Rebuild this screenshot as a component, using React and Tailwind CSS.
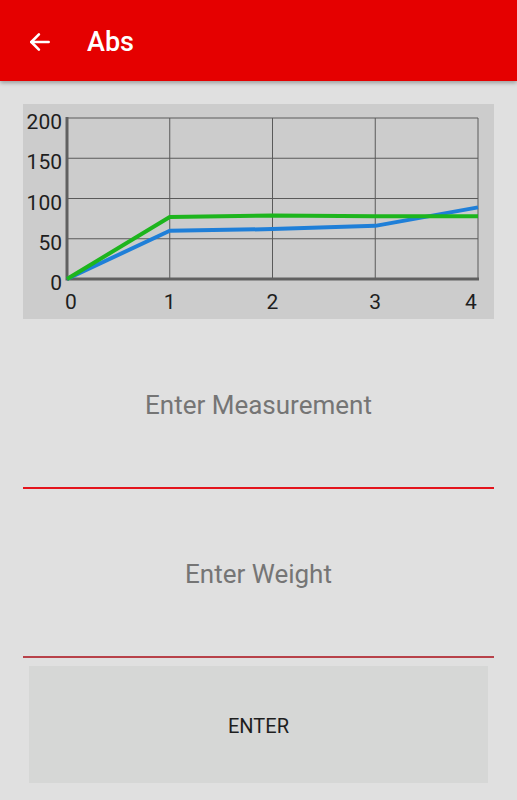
import React from "react";

const X0 = 44;
const XS = 102.75;
const Y0 = 175;
const YS = 40.25;
const px = (i) => X0 + i * XS;
const py = (v) => Y0 - (v / 50) * YS;

const green = [0, 77, 79, 78, 78];
const blue = [0, 60, 62, 66, 89];

function Chart() {
  const pts = (arr) => arr.map((v, i) => `${px(i)},${py(v)}`).join(" ");
  return (
    <svg width="471" height="215" viewBox="0 0 471 215" className="block">
      {[1, 2, 3, 4].map((i) => (
        <line key={"v" + i} x1={px(i)} y1={py(200)} x2={px(i)} y2={Y0} stroke="#5a5a5a" strokeWidth="1" />
      ))}
      {[50, 100, 150, 200].map((v) => (
        <line key={"h" + v} x1={X0} y1={py(v)} x2={px(4)} y2={py(v)} stroke="#5a5a5a" strokeWidth="1" />
      ))}
      <line x1={X0} y1={py(200) - 1} x2={X0} y2={Y0 + 1.5} stroke="#606060" strokeWidth="3" />
      <line x1={X0} y1={Y0} x2={px(4) + 1} y2={Y0} stroke="#606060" strokeWidth="3" />
      <polyline points={pts(blue)} fill="none" stroke="#1f7fd8" strokeWidth="4" strokeLinejoin="round" />
      <polyline points={pts(green)} fill="none" stroke="#1db51d" strokeWidth="4" strokeLinejoin="round" />
      {[0, 50, 100, 150, 200].map((v) => (
        <text key={"yl" + v} x="39" y={py(v) + 11} textAnchor="end" fontSize="21" fill="#1e1e1e" fontFamily="Roboto, sans-serif">
          {v}
        </text>
      ))}
      {[0, 1, 2, 3, 4].map((i) => (
        <text
          key={"xl" + i}
          x={i === 0 ? px(0) + 4 : i === 4 ? px(4) - 7 : px(i)}
          y="205"
          textAnchor="middle"
          fontSize="21"
          fill="#1e1e1e"
          fontFamily="Roboto, sans-serif"
        >
          {i}
        </text>
      ))}
    </svg>
  );
}

export default function App() {
  return (
    <div className="min-h-[800px] bg-[#e0e0e0] font-['Roboto',sans-serif]">
      <div className="h-[81px] pt-[3px] bg-[#e50000] flex items-center shadow-[0_2px_4px_rgba(0,0,0,0.3)] relative">
        <svg width="26" height="26" viewBox="0 0 24 24" className="ml-[27px]" fill="none" stroke="white" strokeWidth="2.4" strokeLinecap="round" strokeLinejoin="round">
          <path d="M20 12H4" />
          <path d="M11 5l-7 7 7 7" />
        </svg>
        <span className="ml-[34px] text-white text-[27px] font-medium leading-none">Abs</span>
      </div>
      <div className="px-[23px] pt-[23px]">
        <div className="h-[215px] bg-[#cccccc]">
          <Chart />
        </div>
        <div className="h-[170px] pt-[4px] flex items-center justify-center border-b-2 border-[#e4141c]">
          <span className="text-[26px] text-[#757575]">Enter Measurement</span>
        </div>
        <div className="h-[169px] pt-[4px] flex items-center justify-center border-b-2 border-[#b8424a]">
          <span className="text-[26px] text-[#757575]">Enter Weight</span>
        </div>
        <div className="mx-[6px] mt-[8px] h-[117px] bg-[#d6d7d6] flex items-center justify-center">
          <span className="text-[20px] text-[#1e1e1e] pt-[2px]">ENTER</span>
        </div>
      </div>
    </div>
  );
}
